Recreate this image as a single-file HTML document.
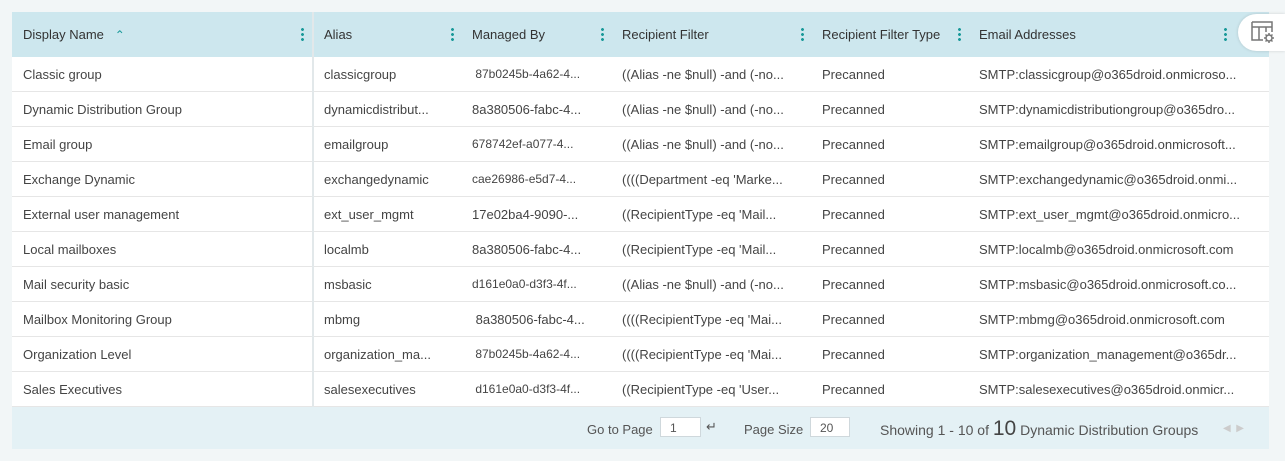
<!DOCTYPE html>
<html><head><style>
body{margin:0;width:1285px;height:461px;background:#f2f6f7;font-family:"Liberation Sans",sans-serif;color:#444;overflow:hidden;position:relative}
.wrap{position:absolute;left:12px;top:12px;width:1257px;height:437px;background:#fff}
table{border-collapse:collapse;table-layout:fixed;width:1257px;font-size:13px}
th{height:45px;background:#cde7ee;font-weight:normal;text-align:left;padding:0 0 0 10px;position:relative;color:#333;white-space:nowrap}
td{height:34px;border-bottom:1px solid #e6e6e6;padding:0 0 0 10px;white-space:nowrap;overflow:hidden}
th:first-child,td:first-child{padding-left:11px}
.k{position:absolute;right:8px;top:15px;width:3px;height:14px;background:radial-gradient(circle,#1a9a9a 1.3px,transparent 1.6px) 0 0/3px 5px repeat-y}
.c1{border-right:2px solid #e2e8ea}
.sm{font-size:12px}
.foot{position:absolute;left:0;top:395px;width:1257px;height:42px;background:#e4f1f5;font-size:13px;color:#555}
.foot span{position:absolute;top:15px}
.box{position:absolute;top:10px;height:20px;border:1px solid #cfd8dc;background:#fff;font-size:12px;line-height:20px;padding-left:9px;box-sizing:border-box}
.gear{position:absolute;left:1238px;top:14px;width:47px;height:37px;background:#fff;border-radius:19px 0 0 19px;box-shadow:0 0 3px rgba(0,0,0,.15)}
</style></head><body>
<div class="wrap">
<table>
<colgroup><col style="width:301px"><col style="width:149px"><col style="width:150px"><col style="width:200px"><col style="width:157px"><col style="width:271px"><col style="width:29px"></colgroup>
<tr><th class="c1">Display Name &nbsp;&nbsp;<span style="font-size:12px;color:#1a9a9a">⌃</span><i class="k"></i></th><th>Alias<i class="k"></i></th><th>Managed By<i class="k"></i></th><th>Recipient Filter<i class="k"></i></th><th>Recipient Filter Type<i class="k"></i></th><th>Email Addresses<i class="k" style="right:13px"></i></th><th></th></tr>
<tr><td class="c1">Classic group</td><td>classicgroup</td><td class="sm">&nbsp;87b0245b-4a62-4...</td><td>((Alias -ne $null) -and (-no...</td><td>Precanned</td><td>SMTP:classicgroup@o365droid.onmicroso...</td><td></td></tr>
<tr><td class="c1">Dynamic Distribution Group</td><td>dynamicdistribut...</td><td>8a380506-fabc-4...</td><td>((Alias -ne $null) -and (-no...</td><td>Precanned</td><td>SMTP:dynamicdistributiongroup@o365dro...</td><td></td></tr>
<tr><td class="c1">Email group</td><td>emailgroup</td><td class="sm">678742ef-a077-4...</td><td>((Alias -ne $null) -and (-no...</td><td>Precanned</td><td>SMTP:emailgroup@o365droid.onmicrosoft...</td><td></td></tr>
<tr><td class="c1">Exchange Dynamic</td><td>exchangedynamic</td><td class="sm">cae26986-e5d7-4...</td><td>((((Department -eq 'Marke...</td><td>Precanned</td><td>SMTP:exchangedynamic@o365droid.onmi...</td><td></td></tr>
<tr><td class="c1">External user management</td><td>ext_user_mgmt</td><td>17e02ba4-9090-...</td><td>((RecipientType -eq 'Mail...</td><td>Precanned</td><td>SMTP:ext_user_mgmt@o365droid.onmicro...</td><td></td></tr>
<tr><td class="c1">Local mailboxes</td><td>localmb</td><td>8a380506-fabc-4...</td><td>((RecipientType -eq 'Mail...</td><td>Precanned</td><td>SMTP:localmb@o365droid.onmicrosoft.com</td><td></td></tr>
<tr><td class="c1">Mail security basic</td><td>msbasic</td><td class="sm">d161e0a0-d3f3-4f...</td><td>((Alias -ne $null) -and (-no...</td><td>Precanned</td><td>SMTP:msbasic@o365droid.onmicrosoft.co...</td><td></td></tr>
<tr><td class="c1">Mailbox Monitoring Group</td><td>mbmg</td><td>&nbsp;8a380506-fabc-4...</td><td>((((RecipientType -eq 'Mai...</td><td>Precanned</td><td>SMTP:mbmg@o365droid.onmicrosoft.com</td><td></td></tr>
<tr><td class="c1">Organization Level</td><td>organization_ma...</td><td class="sm">&nbsp;87b0245b-4a62-4...</td><td>((((RecipientType -eq 'Mai...</td><td>Precanned</td><td>SMTP:organization_management@o365dr...</td><td></td></tr>
<tr><td class="c1">Sales Executives</td><td>salesexecutives</td><td class="sm">&nbsp;d161e0a0-d3f3-4f...</td><td>((RecipientType -eq 'User...</td><td>Precanned</td><td>SMTP:salesexecutives@o365droid.onmicr...</td><td></td></tr>
</table>
<div class="foot">
<span style="left:575px">Go to Page</span><div class="box" style="left:648px;width:41px">1</div><span style="left:694px;top:12px">↵</span>
<span style="left:732px">Page Size</span><div class="box" style="left:798px;width:40px">20</div>
<span style="left:868px;top:10px;font-size:14px"><span style="position:static">Showing 1 - 10 of </span><span style="position:static;font-size:21px;color:#444">10</span> Dynamic Distribution Groups</span>
<span style="left:1211px;color:#ccc;font-size:10px;top:16px">◀ &nbsp;▶</span>
</div>
</div>
<div class="gear"><svg width="26" height="24" style="position:absolute;left:13px;top:7px" viewBox="0 0 26 24" fill="none" stroke="#777" stroke-width="1.5"><path d="M1 1h20v10M1 1v18h11M1 6h20M8 6v13M15 6v5"/><circle cx="18" cy="17" r="3"/><path d="M18 12v2M18 20v2M13 17h2M21 17h2M14.5 13.5l1.4 1.4M20.1 19.1l1.4 1.4M14.5 20.5l1.4-1.4M20.1 14.9l1.4-1.4"/></svg></div>
</body></html>
